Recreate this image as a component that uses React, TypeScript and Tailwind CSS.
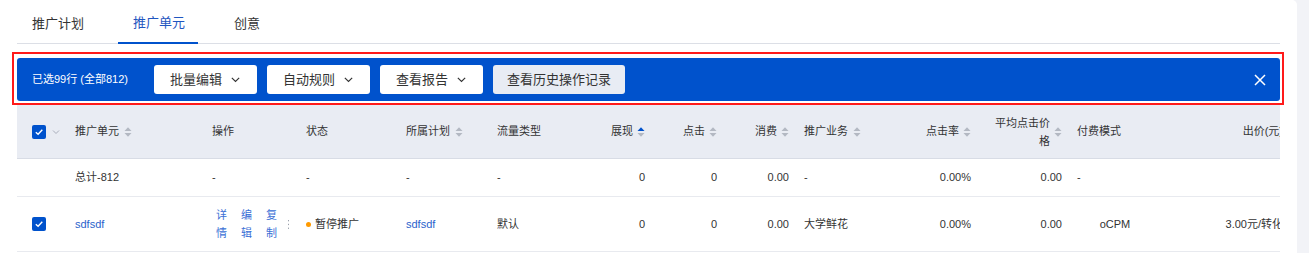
import React from "react";

const FONT = { fontFamily: '"Liberation Sans", "Noto Sans CJK SC", sans-serif' };

function Sort({ active = false }: { active?: boolean }) {
  return (
    <svg width="8" height="12" viewBox="0 0 8 12" className="shrink-0">
      <path d="M0.5 5 L4 1.2 L7.5 5 Z" fill={active ? "#0052cc" : "#b3b8c2"} />
      <path d="M0.5 7 L4 10.8 L7.5 7 Z" fill="#b3b8c2" />
    </svg>
  );
}

function Chevron() {
  return (
    <svg width="11" height="11" viewBox="0 0 12 12" fill="none" stroke="#333" strokeWidth="1.3">
      <path d="M2 4.2 L6 8 L10 4.2" />
    </svg>
  );
}

function Check() {
  return (
    <div className="w-[14px] h-[14px] rounded-[2px] bg-[#0052cc] flex items-center justify-center">
      <svg width="10" height="10" viewBox="0 0 10 10" fill="none" stroke="white" strokeWidth="1.4">
        <path d="M1.8 5.2 L4.1 7.3 L8.3 2.8" />
      </svg>
    </div>
  );
}

function DropBtn({ label }: { label: string }) {
  return (
    <div className="h-[29px] w-[103px] rounded-[3px] bg-white flex items-center justify-center gap-[8px] text-[13px] text-[#333]">
      <span>{label}</span>
      <Chevron />
    </div>
  );
}

const W = [
  "w-[50px]",
  "w-[137px]",
  "w-[94px]",
  "w-[100px]",
  "w-[91px]",
  "w-[91px]",
  "w-[75px]",
  "w-[72px]",
  "w-[70px]",
  "w-[83px]",
  "w-[101px]",
  "w-[90px]",
  "w-[88px]",
  "w-[138px]",
];

export default function App() {
  return (
    <div className="w-full h-[253px] bg-[#f2f3f7] flex overflow-hidden" style={FONT}>
      <div className="relative w-[1297px] h-full bg-white rounded-tr-[5px] px-[17px] shrink-0">
        {/* tabs */}
        <div className="h-[44px] border-b border-[#dcdfe6] flex gap-[21px]">
          <div className="h-[44px] pt-[4px] pl-[15px] pr-[13px] flex items-center text-[13px] text-[#333]">推广计划</div>
          <div className="h-[44px] pt-[4px] pl-[15px] pr-[13px] flex items-center text-[13px] text-[#1f56c0] border-b-2 border-[#0052cc]">推广单元</div>
          <div className="h-[44px] pt-[4px] pl-[15px] pr-[13px] flex items-center text-[13px] text-[#333]">创意</div>
        </div>

        {/* selection bar */}
        <div className="mt-[14px] h-[43px] rounded-[3px] bg-[#0052cc] flex items-center pl-[15px] pr-[14px]">
          <span className="w-[122px] shrink-0 text-[11px] text-white whitespace-nowrap">已选99行 (全部812)</span>
          <div className="flex gap-[10px]">
            <DropBtn label="批量编辑" />
            <DropBtn label="自动规则" />
            <DropBtn label="查看报告" />
            <div className="h-[29px] w-[132px] rounded-[3px] bg-[#e8ecf4] flex items-center justify-center text-[13px] text-[#333]">
              查看历史操作记录
            </div>
          </div>
          <div className="ml-auto">
            <svg width="12" height="12" viewBox="0 0 12 12" stroke="white" strokeWidth="1.5">
              <path d="M1 1 L11 11 M11 1 L1 11" />
            </svg>
          </div>
        </div>

        {/* table */}
        <div className="mt-[4px] overflow-hidden text-[11px] text-[#333]">
          <div className="w-[1280px]">
            {/* header */}
            <div className="flex h-[54px] bg-[#e9ecf3] border-b border-[#d8dce5]">
              <div className={`${W[0]} shrink-0 pl-[15px] flex items-center gap-[6px]`}>
                <Check />
                <svg width="8" height="6" viewBox="0 0 8 6" fill="none" stroke="#a9aebb" strokeWidth="1">
                  <path d="M1 1.5 L4 4.5 L7 1.5" />
                </svg>
              </div>
              <div className={`${W[1]} shrink-0 pl-[8px] flex items-center gap-[5px]`}>
                <span>推广单元</span>
                <Sort />
              </div>
              <div className={`${W[2]} shrink-0 pl-[8px] flex items-center`}>操作</div>
              <div className={`${W[3]} shrink-0 pl-[8px] flex items-center`}>状态</div>
              <div className={`${W[4]} shrink-0 pl-[8px] flex items-center gap-[5px]`}>
                <span>所属计划</span>
                <Sort />
              </div>
              <div className={`${W[5]} shrink-0 pl-[8px] flex items-center`}>流量类型</div>
              <div className={`${W[6]} shrink-0 pr-[10px] flex items-center justify-end gap-[4px]`}>
                <span>展现</span>
                <Sort active />
              </div>
              <div className={`${W[7]} shrink-0 pr-[10px] flex items-center justify-end gap-[4px]`}>
                <span>点击</span>
                <Sort />
              </div>
              <div className={`${W[8]} shrink-0 pr-[8px] flex items-center justify-end gap-[4px]`}>
                <span>消费</span>
                <Sort />
              </div>
              <div className={`${W[9]} shrink-0 pl-[7px] flex items-center gap-[5px]`}>
                <span>推广业务</span>
                <Sort />
              </div>
              <div className={`${W[10]} shrink-0 pr-[10px] flex items-center justify-end gap-[4px]`}>
                <span>点击率</span>
                <Sort />
              </div>
              <div className={`${W[11]} shrink-0 pr-[9px] flex items-center justify-end gap-[4px]`}>
                <span className="text-right leading-[18px] w-[56px]">平均点击价格</span>
                <Sort />
              </div>
              <div className={`${W[12]} shrink-0 pl-[6px] flex items-center`}>付费模式</div>
              <div className={`${W[13]} shrink-0 pr-[14px] flex items-center justify-end whitespace-nowrap`}>出价(元)</div>
            </div>

            {/* total row */}
            <div className="flex h-[38px] border-b border-[#e8eaef]">
              <div className={`${W[0]} shrink-0`} />
              <div className={`${W[1]} shrink-0 pl-[8px] flex items-center`}>总计-812</div>
              <div className={`${W[2]} shrink-0 pl-[8px] flex items-center`}>-</div>
              <div className={`${W[3]} shrink-0 pl-[8px] flex items-center`}>-</div>
              <div className={`${W[4]} shrink-0 pl-[8px] flex items-center`}>-</div>
              <div className={`${W[5]} shrink-0 pl-[8px] flex items-center`}>-</div>
              <div className={`${W[6]} shrink-0 pr-[10px] flex items-center justify-end`}>0</div>
              <div className={`${W[7]} shrink-0 pr-[10px] flex items-center justify-end`}>0</div>
              <div className={`${W[8]} shrink-0 pr-[8px] flex items-center justify-end`}>0.00</div>
              <div className={`${W[9]} shrink-0 pl-[7px] flex items-center`}>-</div>
              <div className={`${W[10]} shrink-0 pr-[10px] flex items-center justify-end`}>0.00%</div>
              <div className={`${W[11]} shrink-0 pr-[9px] flex items-center justify-end`}>0.00</div>
              <div className={`${W[12]} shrink-0 pl-[6px] flex items-center`}>-</div>
              <div className={`${W[13]} shrink-0`} />
            </div>

            {/* data row */}
            <div className="flex h-[55px] border-b border-[#e8eaef]">
              <div className={`${W[0]} shrink-0 pl-[15px] flex items-center`}>
                <Check />
              </div>
              <div className={`${W[1]} shrink-0 pl-[8px] flex items-center text-[#2a62cc]`}>sdfsdf</div>
              <div className={`${W[2]} shrink-0 pl-[12px] flex items-center`}>
                <div className="flex gap-[14px] text-[#3a70d6] leading-[18px]">
                  <span className="w-[11px] break-all">详情</span>
                  <span className="w-[11px] break-all">编辑</span>
                  <span className="w-[11px] break-all">复制</span>
                </div>
                <svg width="3" height="9" viewBox="0 0 3 9" className="ml-[10px]" fill="#9aa0ab">
                  <rect x="1" y="0" width="1" height="1.3" />
                  <rect x="1" y="3.8" width="1" height="1.3" />
                  <rect x="1" y="7.6" width="1" height="1.3" />
                </svg>
              </div>
              <div className={`${W[3]} shrink-0 pl-[8px] flex items-center gap-[4px]`}>
                <span className="w-[5px] h-[5px] rounded-full bg-[#ff9a00]" />
                <span>暂停推广</span>
              </div>
              <div className={`${W[4]} shrink-0 pl-[8px] flex items-center text-[#2a62cc]`}>sdfsdf</div>
              <div className={`${W[5]} shrink-0 pl-[8px] flex items-center`}>默认</div>
              <div className={`${W[6]} shrink-0 pr-[10px] flex items-center justify-end`}>0</div>
              <div className={`${W[7]} shrink-0 pr-[10px] flex items-center justify-end`}>0</div>
              <div className={`${W[8]} shrink-0 pr-[8px] flex items-center justify-end`}>0.00</div>
              <div className={`${W[9]} shrink-0 pl-[7px] flex items-center`}>大学鲜花</div>
              <div className={`${W[10]} shrink-0 pr-[10px] flex items-center justify-end`}>0.00%</div>
              <div className={`${W[11]} shrink-0 pr-[9px] flex items-center justify-end`}>0.00</div>
              <div className={`${W[12]} shrink-0 flex items-center justify-center`}>oCPM</div>
              <div className={`${W[13]} shrink-0 pr-[14px] flex items-center justify-end whitespace-nowrap`}>3.00元/转化</div>
            </div>
          </div>
        </div>

        {/* red highlight annotation */}
        <div className="absolute left-[12px] top-[52px] w-[1272px] h-[53px] border-2 border-[#ff1a1a] pointer-events-none" />
      </div>
    </div>
  );
}
